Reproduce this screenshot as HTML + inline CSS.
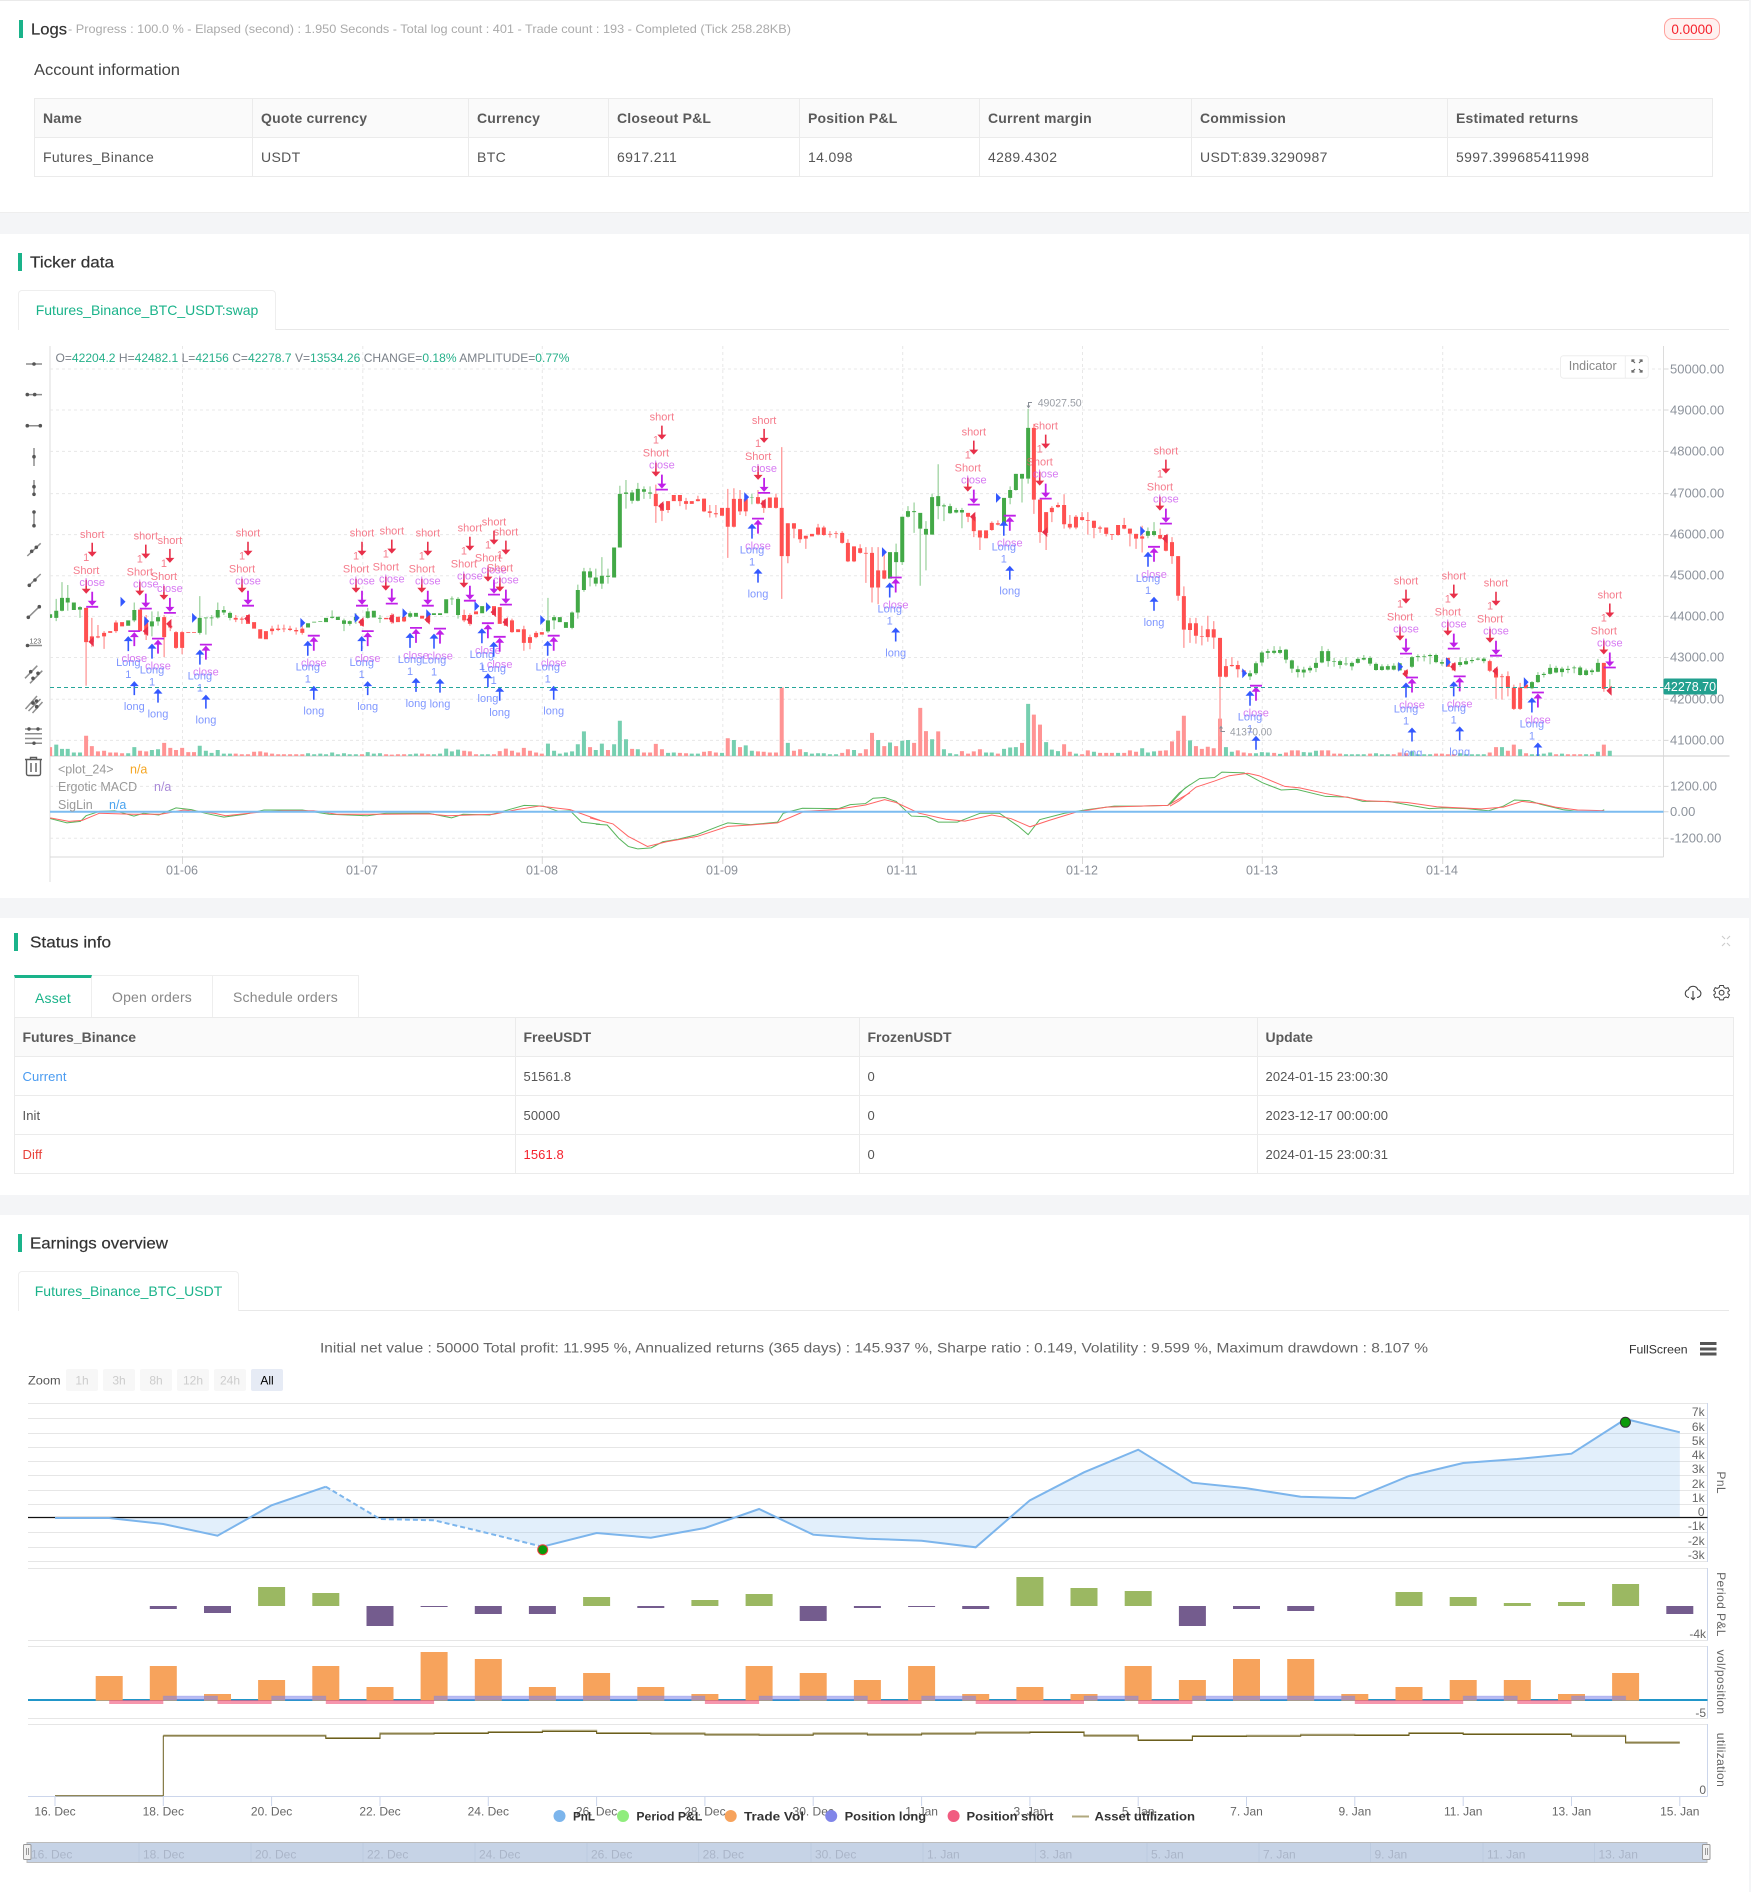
<!DOCTYPE html>
<html lang="en"><head><meta charset="utf-8"><title>Backtest</title>
<style>
html,body{margin:0;padding:0;background:#f4f5f7}
body{position:relative;width:1751px;height:1892px;overflow:hidden;font-family:"Liberation Sans",sans-serif;color:#555}
.sec{position:absolute;left:0;width:1749px;background:#fff}
table{position:absolute;border-collapse:collapse;table-layout:fixed;font-size:14px;color:#555}
th,td{border:1px solid #ebebeb;padding:0 0 0 8px;text-align:left;height:38px;white-space:nowrap;overflow:hidden}
th{background:#fafafa;font-weight:bold;letter-spacing:.2px;color:#5a5a5a}
#t1 td{letter-spacing:.35px}
#t2 th{letter-spacing:0;padding-left:7.5px}
#t2 td{font-size:13px;letter-spacing:.1px;padding-left:7.5px}
.tab{position:absolute;box-sizing:border-box;border:1px solid #eee;border-bottom:0;background:#fff;text-align:center;font-size:14px;color:#888;letter-spacing:.2px}
.ln{position:absolute;background:#e8e8e8;height:1px}
svg#o{position:absolute;left:0;top:0}
svg text{font-family:"Liberation Sans",sans-serif}
.w,.b,.v{vector-effect:non-scaling-stroke;fill:none}
.w{stroke-width:1.4}.b{stroke-width:4}.v{stroke-width:4}
.gw{stroke:#a6d7a8}.rw{stroke:#ff9f9f}.gb{stroke:#43a947}.rb{stroke:#ff5050}.gv{stroke:#76cfb0}.rv{stroke:#ff9494}
.cl text{font-size:11px;text-anchor:middle;fill-opacity:.78}
.r{fill:#f2566a}.p{fill:#cc55ee}.l{fill:#5a78ff}
.ax{font-size:13px;fill:#8d939c}
.xl{font-size:12.5px;fill:#8a8f98;text-anchor:middle}
.hy{font-size:12px;fill:#666;text-anchor:end}
.hx{font-size:12px;fill:#666;text-anchor:middle}
.nv{font-size:12px;fill:#aab5c8}
.lg{font-size:12px;font-weight:bold;fill:#333}
.at{font-size:12px;fill:#666;letter-spacing:.4px;text-anchor:middle}
.zb{font-size:12px;fill:#ccc;text-anchor:middle}
.ttl{font-size:16px;fill:#333;stroke:#333;stroke-width:.2}
.ic{fill:none;stroke:#8e8e8e;stroke-width:1.5}
.id{fill:#555}
.nz{vector-effect:non-scaling-stroke;fill:none}
</style></head><body>
<div class="sec" style="top:0;height:213px;border-top:1px solid #eaeaea;box-sizing:border-box;border-bottom:1px solid #eee"></div>
<div class="sec" style="top:234px;height:664px"></div>
<div class="sec" style="top:918px;height:277px"></div>
<div class="sec" style="top:1215px;height:677px"></div>

<table id="t1" style="left:34px;top:98px;width:1678px">
<colgroup><col style="width:218px"><col style="width:216px"><col style="width:140px"><col style="width:191px"><col style="width:180px"><col style="width:212px"><col style="width:256px"><col style="width:265px"></colgroup>
<tr><th>Name</th><th>Quote currency</th><th>Currency</th><th>Closeout P&amp;L</th><th>Position P&amp;L</th><th>Current margin</th><th>Commission</th><th>Estimated returns</th></tr>
<tr><td>Futures_Binance</td><td>USDT</td><td>BTC</td><td>6917.211</td><td>14.098</td><td>4289.4302</td><td>USDT:839.3290987</td><td>5997.399685411998</td></tr>
</table>

<div class="tab" style="left:18px;top:290px;width:258px;height:40px;line-height:39px;color:#1ab38a;border-radius:4px 4px 0 0;letter-spacing:0">Futures_Binance_BTC_USDT:swap</div>
<div class="ln" style="left:276px;top:329px;width:1453px"></div>

<div class="tab" style="left:14px;top:975px;width:78px;height:42px;line-height:41px;color:#1ab38a;border-top:3px solid #1ab38a;border-right:1px solid #eee">Asset</div>
<div class="tab" style="left:92px;top:975px;width:121px;height:42px;line-height:42px;border-left:0">Open orders</div>
<div class="tab" style="left:213px;top:975px;width:146px;height:42px;line-height:42px;border-left:0">Schedule orders</div>

<table id="t2" style="left:14px;top:1017px;width:1719px">
<colgroup><col style="width:501px"><col style="width:344px"><col style="width:398px"><col style="width:476px"></colgroup>
<tr><th>Futures_Binance</th><th>FreeUSDT</th><th>FrozenUSDT</th><th>Update</th></tr>
<tr><td style="color:#4a9bf0">Current</td><td>51561.8</td><td>0</td><td>2024-01-15 23:00:30</td></tr>
<tr><td>Init</td><td>50000</td><td>0</td><td>2023-12-17 00:00:00</td></tr>
<tr><td style="color:#e8413a">Diff</td><td style="color:#f5222d">1561.8</td><td>0</td><td>2024-01-15 23:00:31</td></tr>
</table>

<div class="tab" style="left:18px;top:1271px;width:221px;height:40px;line-height:39px;color:#1ab38a;border-radius:4px 4px 0 0;letter-spacing:0">Futures_Binance_BTC_USDT</div>
<div class="ln" style="left:239px;top:1310px;width:1490px"></div>

<svg id="o" width="1751" height="1892" viewBox="0 0 1751 1892" xmlns="http://www.w3.org/2000/svg">
<defs>
<clipPath id="pn"><rect x="50" y="346" width="1613.5" height="410"/></clipPath>
<g id="SA">
<path d="M0-64V-54M-6-27V-17" stroke="#e8304a" stroke-width="1.6"/><path d="M-4.5-55H4.5L0-50ZM-10.5-18H-1.5L-6-13Z" fill="#e8304a"/>
<path d="M0-15V-5M-6 0H6" stroke="#c020e8" stroke-width="1.8"/><path d="M-4.5-6H4.5L0-1Z" fill="#c020e8"/>
</g>
<g id="LA">
<path d="M-6 0H6M0 5V15" stroke="#c020e8" stroke-width="1.8"/><path d="M0 1L-4.5 6H4.5Z" fill="#c020e8"/>
<path d="M-6 9V20M0 54V64" stroke="#3358ff" stroke-width="1.6"/><path d="M-6 5L-10.5 10H-1.5ZM0 50L-4.5 55H4.5Z" fill="#3358ff"/>
</g>
</defs>

<!-- section headers -->
<rect x="19" y="20" width="4" height="18" fill="#1ab38a"/>
<text x="31" y="34.5" class="ttl" textLength="36" lengthAdjust="spacingAndGlyphs">Logs</text>
<text x="68" y="33" font-size="12" fill="#aaa" textLength="723" lengthAdjust="spacingAndGlyphs">- Progress : 100.0 % - Elapsed (second) : 1.950  Seconds - Total log count : 401 - Trade count : 193 - Completed (Tick 258.28KB)</text>
<text x="34" y="75" font-size="16" fill="#444" textLength="146" lengthAdjust="spacingAndGlyphs">Account information</text>
<rect x="1664.5" y="18.5" width="55" height="21" rx="8" fill="#fff1f0" stroke="#ffa39e"/>
<text x="1692" y="34" font-size="13.5" fill="#f5222d" text-anchor="middle">0.0000</text>

<rect x="18" y="253" width="4" height="18" fill="#1ab38a"/>
<text x="30" y="267.5" class="ttl" textLength="84" lengthAdjust="spacingAndGlyphs">Ticker data</text>
<rect x="14" y="933" width="4" height="18" fill="#1ab38a"/>
<text x="30" y="947.5" class="ttl" textLength="81" lengthAdjust="spacingAndGlyphs">Status info</text>
<rect x="18" y="1234" width="4" height="18" fill="#1ab38a"/>
<text x="30" y="1248.5" class="ttl" textLength="138" lengthAdjust="spacingAndGlyphs">Earnings overview</text>

<!-- status icons -->
<path d="M1722 936l3 3m5-3l-3 3m-5 7l3-3m5 3l-3-3" fill="none" stroke="#ccc" stroke-width="1.1"/>
<path d="M1689 997.5a4 4 0 0 1-.6-7.9a5 5 0 0 1 9.4 0a4 4 0 0 1-.8 7.9M1693 991V999.5m-2-2l2 2.2l2-2.2" fill="none" stroke="#444" stroke-width="1.1"/>
<circle cx="1721.6" cy="992.7" r="2.4" fill="none" stroke="#444" stroke-width="1.1"/>
<path d="M1719.8 985.5h3.6l.6 2l2 .9l2-.8l1.5 3l-1.6 1.2v1.8l1.6 1.2l-1.5 3l-2-.8l-2 .9l-.6 2h-3.6l-.6-2l-2-.9l-2 .8l-1.5-3l1.6-1.2v-1.8l-1.6-1.2l1.5-3l2 .8l2-.9z" fill="none" stroke="#444" stroke-width="1"/>

<!-- ticker chart -->
<path d="M50 346V882M1663.5 346V857" stroke="#dcdcdc" fill="none"/>
<path d="M50 369H1663M50 410H1663M50 451.4H1663M50 493.6H1663M50 534.6H1663M50 575.7H1663M50 616.4H1663M50 657.5H1663M50 699.3H1663M50 740.4H1663M50 786.4H1663M50 838.2H1663M182.5 346V857M362.8 346V857M542.3 346V857M722.8 346V857M902.7 346V857M1082.5 346V857M1262.3 346V857M1442.7 346V857" stroke="#e8e8e8" stroke-dasharray="3 3" fill="none"/>
<path d="M50 756H1729.5" stroke="#d6d6d6" stroke-width="1.2"/>
<path d="M50 857H1663.5" stroke="#d8d8d8"/>
<path d="M182.5 857v7M362.8 857v7M542.3 857v7M722.8 857v7M902.7 857v7M1082.5 857v7M1262.3 857v7M1442.7 857v7" stroke="#d8d8d8"/>
<path d="M1663.5 369h5M1663.5 410h5M1663.5 451.4h5M1663.5 493.6h5M1663.5 534.6h5M1663.5 575.7h5M1663.5 616.4h5M1663.5 657.5h5M1663.5 699.3h5M1663.5 740.4h5M1663.5 786.4h5M1663.5 811.8h5M1663.5 838.2h5" stroke="#d8d8d8"/>

<g clip-path="url(#pn)">
<!-- part 1 -->
<g transform="translate(0,340) scale(.38265,.35714)">
<path class="v gv" d="M147 1133V1166M162 1145V1166M177 1145V1166M193 1155V1166M209 1155V1166M335 1157V1166M351 1140V1166M397 1148V1166M413 1146V1166M522 1136V1166M538 1150V1166M553 1156V1166M569 1148V1166M585 1158V1166M601 1158V1166M805 1157V1166M821 1160V1166M837 1158V1166M852 1160V1166M868 1155V1166M883 1160V1166M899 1157V1166M914 1160V1166M930 1160V1166M961 1154V1166M977 1158V1166M993 1157V1166M1072 1160V1166M1087 1158V1166M1134 1160V1166M1150 1158V1166M1166 1144V1166M1181 1152V1166M1197 1147V1166M1260 1160V1166M1275 1160V1166M1432 1130V1166M1448 1150V1166M1463 1158V1166M1479 1155V1166M1495 1152V1166M1510 1132V1166M1526 1096V1166M1557 1148V1166"/>
<path class="v rv" d="M131 1140V1166M225 1108V1166M240 1137V1166M256 1152V1166M272 1150V1166M288 1155V1166M303 1155V1166M319 1157V1166M366 1150V1166M382 1152V1166M429 1128V1166M445 1142V1166M460 1148V1166M476 1142V1166M492 1154V1166M507 1154V1166M616 1158V1166M632 1160V1166M648 1160V1166M664 1153V1166M680 1152V1166M695 1155V1166M711 1158V1166M727 1160V1166M742 1160V1166M758 1160V1166M774 1160V1166M790 1160V1166M946 1160V1166M1009 1160V1166M1024 1161V1166M1040 1160V1166M1056 1160V1166M1103 1158V1166M1119 1160V1166M1213 1150V1166M1228 1152V1166M1244 1160V1166M1291 1160V1166M1306 1151V1166M1322 1144V1166M1338 1150V1166M1354 1155V1166M1369 1142V1166M1385 1150V1166M1401 1155V1166M1416 1158V1166M1542 1140V1166"/>
<path class="w gw" d="M147 725V787M162 678V760M177 686V758M209 745V778M351 735V790M397 760V830M413 760V800M522 717V825M538 777V825M553 770V800M569 735V780M585 745V770M601 760V785M868 757V780M899 780V815M914 785V800M930 765V795M961 750V780M993 770V792M1072 760V778M1181 718V742M1197 720V780M1432 722V820M1448 770V810M1495 760V810M1510 685V780M1526 638V705M1542 638V690M1557 640V690"/>
<path class="w rw" d="M225 750V968M240 778V860M256 798V835M272 815V865M303 785V820M382 770V840M429 770V888M445 790V815M460 815V865M476 815V880M616 770V790M632 775V795M711 800V825M727 797V815M742 797V818M758 800V815M774 805V825M790 800V825M1024 765V795M1056 770V790M1213 755V790M1228 765V800M1338 780V820M1369 800V870M1385 825V866M1401 815V835"/>
<path class="b gb" d="M131 768V778M147 758V778M162 722V758M177 722V735M193 735V756M209 748V755M335 785V800M351 756V785M397 788V802M413 776V788M522 778V820M538 777V779M553 777V779M569 756V777M585 756V763M601 764V778M805 793V805M821 789V791M837 787V789M852 778V790M868 775V778M883 775V784M899 785V795M914 787V795M930 775V785M961 760V778M977 758V777M993 778V780M1072 765V775M1087 764V775M1134 765V770M1150 765V770M1166 726V765M1181 724V726M1197 725V770M1260 745V765M1275 745V750M1432 785V816M1448 776V785M1463 776V790M1479 790V806M1495 763V806M1510 700V763M1526 648V700M1542 648V665M1557 665V682"/>
<path class="b rb" d="M225 750V846M240 830V846M256 830V833M272 820V830M288 815V820M303 791V815M319 790V802M366 755V815M382 785V825M429 776V832M445 800V805M460 818V862M476 818V862M492 818V820M507 818V820M616 778V783M632 780V783M648 770V795M664 790V808M680 810V836M695 815V838M711 808V815M727 808V812M742 808V810M758 808V812M774 812V816M790 808V820M946 783V800M1009 778V782M1024 770V790M1040 775V790M1056 775V788M1103 772V780M1119 765V790M1213 770V785M1228 770V795M1244 760V768M1291 745V770M1306 748V795M1322 780V800M1338 785V818M1354 810V818M1369 810V848M1385 832V848M1401 820V832M1416 818V825"/>
<path fill="#3358ff" d="M315 719l13 14-13 14zM377 773l13 14-13 14zM502 764l13 14-13 14zM785 778l13 14-13 14zM927 764l13 14-13 14zM1052 751l13 14-13 14zM1114 754l13 14-13 14zM1240 731l13 14-13 14zM1270 734l13 14-13 14zM1412 770l13 14-13 14z"/>
<path fill="#e8304a" d="M245 831l-14 14 14 14zM387 801l-14 14 14 14zM448 781l-14 14 14 14zM652 766l-14 14 14 14zM950 776l-14 14 14 14zM1029 766l-14 14 14 14zM1123 769l-14 14 14 14zM1233 769l-14 14 14 14zM1296 748l-14 14 14 14zM1327 776l-14 14 14 14z"/>
</g>
<!-- part 2 -->
<g transform="translate(590,340) scale(.38265,.35714)">
<path class="v gv" d="M31 1130V1166M63 1132V1166M78 1066V1166M94 1118V1166M125 1146V1166M204 1156V1166M219 1155V1166M266 1158V1166M282 1158V1166M345 1156V1166M376 1120V1166M407 1135V1166M423 1150V1166M517 1128V1166M564 1154V1166M580 1158V1166M596 1157V1166M611 1157V1166M627 1160V1166M643 1160V1166M690 1148V1166M753 1120V1166M784 1127V1166M816 1122V1166M831 1120V1166M894 1118V1166M925 1146V1166M941 1157V1166M957 1160V1166M1035 1155V1166M1050 1155V1166M1082 1145V1166M1098 1141V1166M1113 1140V1166M1145 1019V1166M1192 1126V1166M1207 1147V1166M1223 1151V1166M1270 1158V1166M1317 1153V1166M1380 1156V1166M1443 1143V1166M1458 1155V1166M1474 1152V1166"/>
<path class="v rv" d="M47 1148V1166M110 1145V1166M141 1155V1166M157 1155V1166M172 1131V1166M188 1146V1166M235 1156V1166M251 1157V1166M298 1153V1166M313 1151V1166M329 1155V1166M360 1115V1166M392 1140V1166M439 1152V1166M454 1153V1166M470 1155V1166M486 1155V1166M501 973V1166M533 1150V1166M549 1146V1166M659 1156V1166M674 1146V1166M706 1157V1166M721 1146V1166M737 1100V1166M769 1137V1166M800 1137V1166M847 1128V1166M863 1030V1166M878 1095V1166M910 1096V1166M972 1151V1166M988 1158V1166M1003 1152V1166M1019 1146V1166M1066 1158V1166M1129 1128V1166M1160 1049V1166M1176 1077V1166M1239 1132V1166M1254 1153V1166M1286 1160V1166M1301 1149V1166M1333 1156V1166M1349 1156V1166M1364 1156V1166M1396 1156V1166M1411 1149V1166M1427 1153V1166M1490 1150V1166M1505 1149V1166M1521 1124V1166M1537 1094V1166M1552 1052V1166"/>
<path class="w gw" d="M31 608V697M47 640V682M78 408V581M94 392V472M110 420V458M125 400V452M141 410V445M157 410V445M423 430V460M800 570V680M816 495V630M831 465V497M847 455V540M863 485V688M878 507V645M894 430V545M910 348V502M925 458V507M941 458V487M957 470V485M972 470V527M1098 410V460M1113 375V422M1129 375V455M1145 193V402M1458 525V555M1474 510V550"/>
<path class="w rw" d="M172 405V512M188 458V507M204 451V484M235 434V465M251 442V475M282 436V452M298 444V482M313 462V497M329 462V497M360 417V610M376 415V525M392 420V490M407 430V493M439 420V460M454 449V484M486 430V472M501 300V725M517 513V625M533 513V555M549 530V568M564 548V585M596 515V547M611 520V548M627 535V553M643 535V555M659 535V570M674 558V622M690 578V622M706 572V598M721 580V680M737 580V735M753 580V740M769 600V670M988 484V510M1003 485V552M1019 533V588M1035 533V555M1050 508V534M1066 505V519M1160 235V487M1176 447V568M1192 482V588M1207 465V510M1223 455V470M1239 432V528M1254 490V530M1270 490V530M1286 482V506M1301 482V545M1317 506V555M1333 520V540M1349 525V550M1364 544V560M1380 518V548M1396 498V530M1411 528V578M1427 543V585M1443 520V595M1490 528V558M1505 546V592M1521 552V627M1537 605V730M1552 690V862"/>
<path class="b gb" d="M31 660V682M47 660V663M63 581V665M78 431V581M94 427V431M110 427V450M125 417V450M141 418V425M157 427V430M423 440V441M784 594V668M800 594V622M816 495V622M831 479V495M847 479V482M863 484V528M878 529V545M894 440V545M910 437V465M925 463V466M941 465V485M957 476V483M972 476V483M1082 442V517M1098 420V442M1113 375V420M1129 375V388M1145 246V388M1458 535V548M1474 535V546"/>
<path class="b rb" d="M172 431V465M188 458V478M204 451V476M219 434V451M235 434V451M251 451V459M266 451V459M282 446V451M298 444V480M313 480V484M329 485V488M345 470V492M360 470V523M376 445V523M392 445V480M407 445V480M439 440V458M454 449V470M470 441V470M486 441V470M501 470V605M517 513V605M533 513V528M549 530V558M564 548V556M580 543V550M596 525V545M611 525V546M627 543V545M643 541V543M659 540V568M674 568V620M690 578V620M706 583V596M721 596V598M737 596V693M753 645V693M769 645V668M988 484V495M1003 495V535M1019 533V553M1035 533V555M1050 512V532M1066 513V517M1160 246V447M1176 447V538M1192 482V540M1207 470V482M1223 462V468M1239 462V516M1254 515V525M1270 495V525M1286 496V504M1301 504V506M1317 506V526M1333 525V528M1349 525V543M1364 544V546M1380 518V546M1396 518V528M1411 528V542M1427 543V556M1443 550V556M1490 546V556M1505 546V590M1521 566V605M1537 605V716M1552 717V811"/>
<path fill="#3358ff" d="M403 426l13 14-13 14zM763 580l13 14-13 14zM1061 428l13 14-13 14zM1438 521l13 14-13 14z"/>
<path fill="#e8304a" d="M192 451l-14 14 14 14zM459 444l-14 14 14 14zM1007 481l-14 14 14 14zM1195 524l-14 14 14 14zM1509 542l-14 14 14 14z"/>
</g>
<!-- part 3 -->
<g transform="translate(1170,340) scale(.3705,.35714)">
<path class="v gv" d="M151 1140V1166M167 1153V1166M232 1157V1166M248 1154V1166M264 1155V1166M297 1159V1166M361 1154V1166M378 1155V1166M394 1150V1166M475 1160V1166M491 1160V1166M507 1160V1166M523 1160V1166M556 1157V1166M572 1160V1166M588 1160V1166M653 1152V1166M669 1160V1166M686 1160V1166M702 1160V1166M783 1157V1166M799 1160V1166M815 1160V1166M831 1160V1166M847 1160V1166M896 1140V1166M945 1146V1166M977 1160V1166M993 1160V1166M1009 1158V1166M1026 1155V1166M1058 1158V1166M1123 1160V1166M1155 1153V1166M1187 1150V1166M54 1121V1166"/>
<path class="v rv" d="M70 1137V1166M86 1145V1166M102 1139V1166M118 1143V1166M135 1060V1166M183 1149V1166M199 1155V1166M216 1157V1166M281 1156V1166M313 1155V1166M329 1149V1166M345 1149V1166M410 1149V1166M427 1149V1166M443 1158V1166M459 1158V1166M540 1158V1166M604 1160V1166M620 1155V1166M637 1157V1166M718 1158V1166M734 1158V1166M750 1160V1166M766 1160V1166M863 1155V1166M880 1140V1166M912 1150V1166M928 1133V1166M961 1157V1166M1042 1160V1166M1074 1160V1166M1091 1160V1166M1107 1160V1166M1139 1160V1166M1171 1133V1166"/>
<path class="w gw" d="M216 925V952M232 900V938M248 870V912M264 865V893M281 857V880M297 858V880M313 865V905M329 895V932M345 912V945M361 915V945M378 912V932M394 890V930M410 857V905M427 865V915M443 890V915M459 895V920M475 888V912M491 900V925M507 888V906M523 882V897M540 885V912M556 903V926M572 908V926M588 908V925M604 905V925M653 885V918M669 880V900M686 880V900M702 878V908M718 878V905M734 895V912M783 888V915M799 890V910M815 888V905M831 888V897M847 888V905M977 955V978M993 930V960M1009 930V945M1026 908V937M1042 912V933M1058 915V943M1074 912V933M1091 912V933M1107 912V940M1123 920V940M1139 920V938M1155 893V930M1187 950V990"/>
<path class="w rw" d="M54 778V848M70 778V850M86 800V855M102 772V845M118 787V865M135 834V1110M151 893V945M167 888V915M183 898V945M863 895V930M880 925V1005M896 935V1007M912 928V998M928 965V1036M945 960V1036M1171 904V985"/>
<path class="b gb" d="M216 933V942M232 905V933M248 875V903M264 871V876M281 870V876M297 868V876M313 867V895M329 897V920M345 922V930M361 923V931M378 918V925M394 904V918M410 871V903M427 871V899M443 899V901M459 899V910M475 906V908M491 904V914M507 893V904M523 890V895M540 890V906M556 907V924M572 914V924M588 913V923M604 912V923M620 905V925M653 888V915M669 885V888M686 886V888M702 882V885M718 882V902M734 902V906M783 902V910M799 899V908M815 896V899M831 892V895M847 892V899M977 958V975M993 938V958M1009 935V938M1026 918V935M1042 918V931M1058 920V930M1074 921V924M1091 917V919M1107 917V938M1123 925V938M1139 925V930M1155 904V929"/>
<path class="b rb" d="M54 793V812M70 793V828M86 829V831M102 810V832M118 810V833M135 834V943M151 913V943M167 910V913M183 910V922M199 925V930M637 925V935M750 890V915M766 905V925M863 899V926M880 920V945M896 942V944M912 941V972M928 973V1033M945 973V1033M961 965V975M1171 904V977"/>
<path fill="#3358ff" d="M195 919l13 14-13 14zM616 901l13 14-13 14zM745 888l13 14-13 14zM955 944l13 14-13 14z"/>
<path fill="#e8304a" d="M641 921l-14 14 14 14zM770 901l-14 14 14 14zM884 913l-14 14 14 14zM1192 968l-14 14 14 14z"/>
</g>

<!-- short clusters -->
<g class="cl">
<g transform="translate(92.2,606.8)"><use href="#SA"/><text class="r" y="-69">short</text><text class="r" x="-6" y="-46">1</text><text class="r" x="-6" y="-33">Short</text><text class="p" y="-21">close</text></g>
<g transform="translate(145.8,608.6)"><use href="#SA"/><text class="r" y="-69">short</text><text class="r" x="-6" y="-46">1</text><text class="r" x="-6" y="-33">Short</text><text class="p" y="-21">close</text></g>
<g transform="translate(169.9,612.9)"><use href="#SA"/><text class="r" y="-69">short</text><text class="r" x="-6" y="-46">1</text><text class="r" x="-6" y="-33">Short</text><text class="p" y="-21">close</text></g>
<g transform="translate(248,605.7)"><use href="#SA"/><text class="r" y="-69">short</text><text class="r" x="-6" y="-46">1</text><text class="r" x="-6" y="-33">Short</text><text class="p" y="-21">close</text></g>
<g transform="translate(362,605.7)"><use href="#SA"/><text class="r" y="-69">short</text><text class="r" x="-6" y="-46">1</text><text class="r" x="-6" y="-33">Short</text><text class="p" y="-21">close</text></g>
<g transform="translate(391.8,603.6)"><use href="#SA"/><text class="r" y="-69">short</text><text class="r" x="-6" y="-46">1</text><text class="r" x="-6" y="-33">Short</text><text class="p" y="-21">close</text></g>
<g transform="translate(427.8,605.7)"><use href="#SA"/><text class="r" y="-69">short</text><text class="r" x="-6" y="-46">1</text><text class="r" x="-6" y="-33">Short</text><text class="p" y="-21">close</text></g>
<g transform="translate(469.9,600.7)"><use href="#SA"/><text class="r" y="-69">short</text><text class="r" x="-6" y="-46">1</text><text class="r" x="-6" y="-33">Short</text><text class="p" y="-21">close</text></g>
<g transform="translate(494,594.6)"><use href="#SA"/><text class="r" y="-69">short</text><text class="r" x="-6" y="-46">1</text><text class="r" x="-6" y="-33">Short</text><text class="p" y="-21">close</text></g>
<g transform="translate(505.9,604.6)"><use href="#SA"/><text class="r" y="-69">short</text><text class="r" x="-6" y="-46">1</text><text class="r" x="-6" y="-33">Short</text><text class="p" y="-21">close</text></g>
<g transform="translate(661.9,489.6)"><use href="#SA"/><text class="r" y="-69">short</text><text class="r" x="-6" y="-46">1</text><text class="r" x="-6" y="-33">Short</text><text class="p" y="-21">close</text></g>
<g transform="translate(764.1,492.9)"><use href="#SA"/><text class="r" y="-69">short</text><text class="r" x="-6" y="-46">1</text><text class="r" x="-6" y="-33">Short</text><text class="p" y="-21">close</text></g>
<g transform="translate(973.8,504.6)"><use href="#SA"/><text class="r" y="-69">short</text><text class="r" x="-6" y="-46">1</text><text class="r" x="-6" y="-33">Short</text><text class="p" y="-21">close</text></g>
<g transform="translate(1045.7,498.6)"><use href="#SA"/><text class="r" y="-69">short</text><text class="r" x="-6" y="-46">1</text><text class="r" x="-6" y="-33">Short</text><text class="p" y="-21">close</text></g>
<g transform="translate(1165.9,523.6)"><use href="#SA"/><text class="r" y="-69">short</text><text class="r" x="-6" y="-46">1</text><text class="r" x="-6" y="-33">Short</text><text class="p" y="-21">close</text></g>
<g transform="translate(1406,653.6)"><use href="#SA"/><text class="r" y="-69">short</text><text class="r" x="-6" y="-46">1</text><text class="r" x="-6" y="-33">Short</text><text class="p" y="-21">close</text></g>
<g transform="translate(1453.8,648.6)"><use href="#SA"/><text class="r" y="-69">short</text><text class="r" x="-6" y="-46">1</text><text class="r" x="-6" y="-33">Short</text><text class="p" y="-21">close</text></g>
<g transform="translate(1496,655.7)"><use href="#SA"/><text class="r" y="-69">short</text><text class="r" x="-6" y="-46">1</text><text class="r" x="-6" y="-33">Short</text><text class="p" y="-21">close</text></g>
<g transform="translate(1609.8,667.5)"><use href="#SA"/><text class="r" y="-69">short</text><text class="r" x="-6" y="-46">1</text><text class="r" x="-6" y="-33">Short</text><text class="p" y="-21">close</text></g>
<!-- long clusters -->
<g transform="translate(134.3,631.1)"><use href="#LA"/><text class="p" y="31">close</text><text class="l" x="-6" y="35">Long</text><text class="l" x="-6" y="47">1</text><text class="l" y="79">long</text></g>
<g transform="translate(158,638.6)"><use href="#LA"/><text class="p" y="31">close</text><text class="l" x="-6" y="35">Long</text><text class="l" x="-6" y="47">1</text><text class="l" y="79">long</text></g>
<g transform="translate(205.9,644.6)"><use href="#LA"/><text class="p" y="31">close</text><text class="l" x="-6" y="35">Long</text><text class="l" x="-6" y="47">1</text><text class="l" y="79">long</text></g>
<g transform="translate(313.8,635.7)"><use href="#LA"/><text class="p" y="31">close</text><text class="l" x="-6" y="35">Long</text><text class="l" x="-6" y="47">1</text><text class="l" y="79">long</text></g>
<g transform="translate(367.7,631.1)"><use href="#LA"/><text class="p" y="31">close</text><text class="l" x="-6" y="35">Long</text><text class="l" x="-6" y="47">1</text><text class="l" y="79">long</text></g>
<g transform="translate(416,627.9)"><use href="#LA"/><text class="p" y="31">close</text><text class="l" x="-6" y="35">Long</text><text class="l" x="-6" y="47">1</text><text class="l" y="79">long</text></g>
<g transform="translate(440,628.6)"><use href="#LA"/><text class="p" y="31">close</text><text class="l" x="-6" y="35">Long</text><text class="l" x="-6" y="47">1</text><text class="l" y="79">long</text></g>
<g transform="translate(487.9,623.2)"><use href="#LA"/><text class="p" y="31">close</text><text class="l" x="-6" y="35">Long</text><text class="l" x="-6" y="47">1</text><text class="l" y="79">long</text></g>
<g transform="translate(499.7,636.8)"><use href="#LA"/><text class="p" y="31">close</text><text class="l" x="-6" y="35">Long</text><text class="l" x="-6" y="47">1</text><text class="l" y="79">long</text></g>
<g transform="translate(553.7,635.7)"><use href="#LA"/><text class="p" y="31">close</text><text class="l" x="-6" y="35">Long</text><text class="l" x="-6" y="47">1</text><text class="l" y="79">long</text></g>
<g transform="translate(758,518.6)"><use href="#LA"/><text class="p" y="31">close</text><text class="l" x="-6" y="35">Long</text><text class="l" x="-6" y="47">1</text><text class="l" y="79">long</text></g>
<g transform="translate(895.7,577.5)"><use href="#LA"/><text class="p" y="31">close</text><text class="l" x="-6" y="35">Long</text><text class="l" x="-6" y="47">1</text><text class="l" y="79">long</text></g>
<g transform="translate(1009.8,515.7)"><use href="#LA"/><text class="p" y="31">close</text><text class="l" x="-6" y="35">Long</text><text class="l" x="-6" y="47">1</text><text class="l" y="79">long</text></g>
<g transform="translate(1154,546.8)"><use href="#LA"/><text class="p" y="31">close</text><text class="l" x="-6" y="35">Long</text><text class="l" x="-6" y="47">1</text><text class="l" y="79">long</text></g>
<g transform="translate(1256,685.7)"><use href="#LA"/><text class="p" y="31">close</text><text class="l" x="-6" y="35">Long</text><text class="l" x="-6" y="47">1</text><text class="l" y="79">long</text></g>
<g transform="translate(1412,677.5)"><use href="#LA"/><text class="p" y="31">close</text><text class="l" x="-6" y="35">Long</text><text class="l" x="-6" y="47">1</text><text class="l" y="79">long</text></g>
<g transform="translate(1459.7,676.4)"><use href="#LA"/><text class="p" y="31">close</text><text class="l" x="-6" y="35">Long</text><text class="l" x="-6" y="47">1</text><text class="l" y="79">long</text></g>
<g transform="translate(1537.9,692.5)"><use href="#LA"/><text class="p" y="31">close</text><text class="l" x="-6" y="35">Long</text><text class="l" x="-6" y="47">1</text><text class="l" y="79">long</text></g>
</g>
</g>

<!-- price line -->
<path d="M50 687.5H1663.5" stroke="#26a69a" stroke-dasharray="4 3"/>
<rect x="1663.5" y="678.5" width="53.5" height="16" rx="1.5" fill="#22a08f"/>
<text x="1690" y="691" font-size="12.5" fill="#fff" text-anchor="middle">42278.70</text>

<!-- high / low labels -->
<path d="M1032 402.5h-3.5v5m-1.5-2l1.5 2l1.5-2" fill="none" stroke="#8a8f98"/>
<text x="1037.7" y="406.5" font-size="11" fill="#9a9ea5" textLength="44" lengthAdjust="spacingAndGlyphs">49027.50</text>
<path d="M1225 731.5h-4v-5m-1.5 2l1.5-2l1.5 2" fill="none" stroke="#8a8f98"/>
<text x="1230" y="735.5" font-size="11" fill="#9a9ea5" textLength="42" lengthAdjust="spacingAndGlyphs">41370.00</text>

<!-- sub pane -->
<g transform="translate(0,340) scale(.38265,.35714)" fill="none" stroke-width="1">
<path class="nz" stroke="#58b55c" d="M131 1340L175 1352 210 1348 225 1332 260 1320 300 1318 350 1333 375 1325 415 1330 460 1310 500 1315 540 1326 585 1336 640 1328 690 1316 790 1316 860 1328 960 1332 1010 1325 1120 1325 1180 1338 1210 1328 1280 1330 1340 1312 1370 1303 1420 1305 1460 1320 1490 1318 1520 1350 1568 1356"/>
<path class="nz" stroke="#ff6464" d="M131 1338L180 1348 215 1345 260 1325 350 1328 420 1328 480 1316 560 1325 590 1332 680 1322 740 1318 820 1318 880 1328 1000 1328 1120 1327 1170 1332 1290 1328 1350 1315 1410 1305 1490 1315 1568 1345"/>
</g>
<g transform="translate(590,340) scale(.38265,.35714)" fill="none">
<path class="nz" stroke="#58b55c" d="M15 1356L45 1358 75 1395 100 1418 125 1425 160 1422 190 1405 230 1398 280 1385 340 1360 360 1352 420 1357 490 1350 505 1325 555 1311 650 1312 680 1301 720 1298 740 1283 770 1281 800 1292 840 1333 880 1335 910 1350 960 1350 1020 1325 1070 1325 1120 1362 1145 1385 1175 1343 1240 1325 1300 1315 1370 1305 1440 1305 1510 1303 1540 1268 1568 1245"/>
<path class="nz" stroke="#ff6464" d="M0 1338L60 1355 100 1390 150 1418 200 1405 280 1390 360 1362 420 1358 490 1352 560 1320 640 1315 720 1302 770 1287 800 1295 860 1325 930 1342 980 1347 1050 1330 1100 1340 1150 1363 1200 1345 1270 1322 1350 1308 1440 1305 1510 1303 1568 1268"/>
</g>
<g transform="translate(1170,340) scale(.3705,.35714)" fill="none">
<path class="nz" stroke="#58b55c" d="M0 1300L40 1255 80 1228 120 1225 140 1210 200 1212 250 1240 300 1260 340 1258 420 1278 480 1280 520 1292 590 1292 650 1303 700 1312 740 1310 800 1312 860 1318 900 1305 930 1288 970 1290 1000 1300 1060 1315 1100 1320 1160 1321 1172 1315"/>
<path class="nz" stroke="#ff6464" d="M0 1305L25 1290 70 1252 120 1235 160 1220 210 1213 240 1220 310 1250 350 1254 420 1270 530 1290 640 1295 720 1307 840 1313 900 1308 950 1292 1000 1298 1040 1308 1100 1316 1140 1317 1172 1318"/>
</g>
<path d="M50 811.8H1663.5" stroke="#7cbcf0" stroke-width="2"/>

<text x="55.5" y="362" font-size="12" fill="#7a8088" textLength="514" lengthAdjust="spacingAndGlyphs">O=<tspan fill="#26b08a">42204.2</tspan> H=<tspan fill="#26b08a">42482.1</tspan> L=<tspan fill="#26b08a">42156</tspan> C=<tspan fill="#26b08a">42278.7</tspan> V=<tspan fill="#26b08a">13534.26</tspan> CHANGE=<tspan fill="#26b08a">0.18%</tspan> AMPLITUDE=<tspan fill="#26b08a">0.77%</tspan></text>

<g font-size="12.5">
<text x="58" y="773.5" fill="#999">&lt;plot_24&gt;</text><text x="130" y="773.5" fill="#f5a623">n/a</text>
<text x="58" y="791" fill="#999">Ergotic MACD</text><text x="154" y="791" fill="#a98ad8">n/a</text>
<text x="58" y="809" fill="#999">SigLin</text><text x="109" y="809" fill="#4aa3ef">n/a</text>
</g>

<g class="ax">
<text x="1670" y="373.5">50000.00</text><text x="1670" y="414.5">49000.00</text><text x="1670" y="455.5">48000.00</text><text x="1670" y="497.5">47000.00</text><text x="1670" y="538.5">46000.00</text><text x="1670" y="579.5">45000.00</text><text x="1670" y="620.5">44000.00</text><text x="1670" y="661.5">43000.00</text><text x="1670" y="703.5">42000.00</text><text x="1670" y="744.5">41000.00</text><text x="1670" y="790.5">1200.00</text><text x="1670" y="816">0.00</text><text x="1670" y="842.5">-1200.00</text>
</g>
<g class="xl"><text x="182" y="874.5">01-06</text><text x="362" y="874.5">01-07</text><text x="542" y="874.5">01-08</text><text x="722" y="874.5">01-09</text><text x="902" y="874.5">01-11</text><text x="1082" y="874.5">01-12</text><text x="1262" y="874.5">01-13</text><text x="1442" y="874.5">01-14</text></g>

<rect x="1560.5" y="355.7" width="87.8" height="22.5" rx="3" fill="#fff" stroke="#eee"/>
<path d="M1625.3 356v22" stroke="#eee"/>
<text x="1592.7" y="370" font-size="12.5" fill="#888" text-anchor="middle">Indicator</text>
<path d="M1632 362v-2h2.5m-2.5 0l3 3M1642 362v-2h-2.5m2.5 0l-3 3M1632 370v2h2.5m-2.5 0l3-3M1642 370v2h-2.5m2.5 0l-3-3" fill="none" stroke="#666" stroke-width="1.2"/>

<!-- drawing toolbar -->
<g>
<path class="ic" d="M26 364H42M26 394.6H42M27 425.7H41M34 448V466M34 480V496M34 512V526M27.3 556L40.7 543.3M29 585.5L40.7 574M28.3 617.3L39.3 606.7M27 645.5H42M25 678.3L37.3 665.7M30 683.3L42.3 670.7M25.5 709L37 696M28.5 711L40.5 699M32.5 713L42.5 702M25 729H42M25 733.7H42M25 738.5H42M25 743.2H42"/>
<g class="id"><circle cx="34" cy="364" r="1.8"/><circle cx="27.3" cy="394.6" r="1.8"/><circle cx="34.7" cy="394.6" r="1.8"/><circle cx="27.3" cy="425.7" r="1.8"/><circle cx="40.3" cy="425.7" r="1.8"/><circle cx="34" cy="456.7" r="1.8"/><circle cx="34" cy="486.7" r="1.8"/><circle cx="34" cy="494.3" r="1.8"/><circle cx="34" cy="512" r="1.8"/><circle cx="34" cy="525.7" r="1.8"/><circle cx="31.7" cy="551.3" r="1.8"/><circle cx="36.3" cy="547.3" r="1.8"/><circle cx="29.3" cy="585.3" r="1.8"/><circle cx="35" cy="580" r="1.8"/><circle cx="28.3" cy="617.3" r="1.8"/><circle cx="39.3" cy="606.7" r="1.8"/><circle cx="27.5" cy="645.5" r="1.8"/><circle cx="30.7" cy="671.7" r="1.8"/><circle cx="33" cy="678.3" r="1.8"/><circle cx="38" cy="673.3" r="1.8"/><circle cx="33" cy="703" r="1.9"/><circle cx="36.7" cy="706.7" r="1.8"/><circle cx="36.5" cy="701" r="1.8"/><circle cx="29" cy="729" r="1.7"/><circle cx="38" cy="729" r="1.7"/><circle cx="34" cy="743.2" r="1.7"/></g>
<text x="35.3" y="643.5" font-size="7" fill="#5c5c5c" text-anchor="middle">123</text>
<path d="M25 759.5H42M30.5 759.5V757.5H36.5V759.5M26.5 760V773.5Q26.5 775.5 28.5 775.5H38.5Q40.5 775.5 40.5 773.5V760M31 763V772M36 763V772" fill="none" stroke="#5c5c5c" stroke-width="1.4"/>
</g>

<!-- earnings chart -->
<text x="320" y="1352.5" font-size="14" fill="#666" textLength="1108" lengthAdjust="spacingAndGlyphs">Initial net value : 50000 Total profit: 11.995 %, Annualized returns (365 days) : 145.937 %, Sharpe ratio : 0.149, Volatility : 9.599 %, Maximum drawdown : 8.107 %</text>
<text x="1629" y="1353.5" font-size="12" fill="#333" textLength="58.6" lengthAdjust="spacingAndGlyphs">FullScreen</text>
<path d="M1700 1343.5H1716.5M1700 1349H1716.5M1700 1354H1716.5" stroke="#555" stroke-width="3"/>
<text x="28" y="1384.5" font-size="12" fill="#555" textLength="32.6" lengthAdjust="spacingAndGlyphs">Zoom</text>
<g fill="#f7f7f7"><rect x="66" y="1369" width="32" height="22" rx="2"/><rect x="103" y="1369" width="32" height="22" rx="2"/><rect x="140" y="1369" width="32" height="22" rx="2"/><rect x="177" y="1369" width="32" height="22" rx="2"/><rect x="214" y="1369" width="32" height="22" rx="2"/></g>
<rect x="251" y="1369" width="32" height="22" rx="2" fill="#e6ebf5"/>
<g class="zb"><text x="82" y="1384.5">1h</text><text x="119" y="1384.5">3h</text><text x="156" y="1384.5">8h</text><text x="193" y="1384.5">12h</text><text x="230" y="1384.5">24h</text></g>
<text x="267" y="1384.5" font-size="12" fill="#000" text-anchor="middle">All</text>

<path d="M28 1403.5H1707.5M28 1418.5H1707.5M28 1433.5H1707.5M28 1447.5H1707.5M28 1461.5H1707.5M28 1475.5H1707.5M28 1490.5H1707.5M28 1504.5H1707.5M28 1532.5H1707.5M28 1547.5H1707.5M28 1561.5H1707.5M28 1568.5H1707.5M28 1640.5H1707.5M28 1646.5H1707.5M28 1718.5H1707.5M28 1724.5H1707.5" stroke="#e6e6e6" fill="none"/>
<path d="M1707.5 1403V1562M1707.5 1568V1640.5M1707.5 1646V1718.5M1707.5 1724V1796.5M28 1796.5H1707.5" stroke="#ccd6eb" fill="none"/>

<path d="M55 1518L109.2 1518 163.3 1524 217.5 1535.7 271.6 1505.3 325.8 1486.7 380 1519 434.1 1520.3 488.3 1533.3 542.4 1546.7 596.6 1533 650.8 1537.7 704.9 1528 759.1 1509 813.2 1534.7 867.4 1538.7 921.6 1540.7 975.7 1547.3 1029.9 1500.3 1084 1472.3 1138.2 1449.7 1192.4 1482.7 1246.5 1488.3 1300.7 1496.7 1354.8 1498.3 1409 1476 1463.2 1463 1517.3 1459 1571.5 1453.7 1625.6 1419 1679.8 1432.3V1517.5H55Z" fill="#7cb5ec" fill-opacity=".22"/>
<path d="M28 1517.5H1707.5" stroke="#111" stroke-width="1.2"/>
<path d="M55 1518L109.2 1518 163.3 1524 217.5 1535.7 271.6 1505.3 325.8 1486.7M542.4 1546.7L596.6 1533 650.8 1537.7 704.9 1528 759.1 1509 813.2 1534.7 867.4 1538.7 921.6 1540.7 975.7 1547.3 1029.9 1500.3 1084 1472.3 1138.2 1449.7 1192.4 1482.7 1246.5 1488.3 1300.7 1496.7 1354.8 1498.3 1409 1476 1463.2 1463 1517.3 1459 1571.5 1453.7 1625.6 1419 1679.8 1432.3" fill="none" stroke="#7cb5ec" stroke-width="2"/>
<path d="M325.8 1486.7L380 1519 434.1 1520.3 488.3 1533.3 542.4 1546.7" fill="none" stroke="#7cb5ec" stroke-width="2" stroke-dasharray="5 3"/>
<circle cx="542.7" cy="1549.7" r="5" fill="#0a9a0a" stroke="#f04040"/>
<circle cx="1625.4" cy="1422.3" r="5" fill="#0a9a0a" stroke="#333"/>

<g class="hy"><text x="1704.6" y="1416">7k</text><text x="1704.6" y="1431">6k</text><text x="1704.6" y="1445">5k</text><text x="1704.6" y="1459">4k</text><text x="1704.6" y="1473">3k</text><text x="1704.6" y="1488">2k</text><text x="1704.6" y="1502">1k</text><text x="1704.6" y="1516">0</text><text x="1704.6" y="1530">-1k</text><text x="1704.6" y="1545">-2k</text><text x="1704.6" y="1559">-3k</text><text x="1706" y="1638">-4k</text><text x="1706" y="1717">-5</text><text x="1706" y="1794">0</text></g>
<text class="at" transform="translate(1717,1482.7) rotate(90)">PnL</text>
<text class="at" transform="translate(1717,1604.5) rotate(90)">Period P&amp;L</text>
<text class="at" transform="translate(1717,1682) rotate(90)">vol/position</text>
<text class="at" transform="translate(1717,1760) rotate(90)">utilization</text>

<!-- period pnl bars -->
<g fill="#745c8e">
<rect x="149.8" y="1606" width="27" height="3"/><rect x="204" y="1606" width="27" height="7"/><rect x="366.5" y="1606" width="27" height="20"/><rect x="420.6" y="1606" width="27" height="1"/><rect x="474.8" y="1606" width="27" height="8"/><rect x="528.9" y="1606" width="27" height="8"/><rect x="637.3" y="1606" width="27" height="2"/><rect x="799.7" y="1606" width="27" height="15"/><rect x="853.9" y="1606" width="27" height="2"/><rect x="908.1" y="1606" width="27" height="1"/><rect x="962.2" y="1606" width="27" height="3"/><rect x="1178.9" y="1606" width="27" height="20"/><rect x="1233" y="1606" width="27" height="3"/><rect x="1287.2" y="1606" width="27" height="5"/><rect x="1666.3" y="1606" width="27" height="8"/>
</g>
<g fill="#9bb862">
<rect x="258.1" y="1587" width="27" height="19"/><rect x="312.3" y="1593" width="27" height="13"/><rect x="583.1" y="1597" width="27" height="9"/><rect x="691.4" y="1600" width="27" height="6"/><rect x="745.6" y="1594" width="27" height="12"/><rect x="1016.4" y="1577" width="27" height="29"/><rect x="1070.5" y="1588" width="27" height="18"/><rect x="1124.7" y="1591" width="27" height="15"/><rect x="1395.5" y="1592" width="27" height="14"/><rect x="1449.7" y="1597" width="27" height="9"/><rect x="1503.8" y="1603" width="27" height="3"/><rect x="1558" y="1602" width="27" height="4"/><rect x="1612.1" y="1584" width="27" height="22"/>
</g>

<!-- vol bars -->
<path d="M28 1700H1707.5" stroke="#2196c9" stroke-width="2"/>
<g fill="#f7a35c">
<rect x="95.7" y="1676" width="27" height="24.7"/><rect x="149.8" y="1666" width="27" height="34.7"/><rect x="204" y="1694" width="27" height="6.7"/><rect x="258.1" y="1680" width="27" height="20.7"/><rect x="312.3" y="1666" width="27" height="34.7"/><rect x="366.5" y="1687" width="27" height="13.7"/><rect x="420.6" y="1652" width="27" height="48.7"/><rect x="474.8" y="1659" width="27" height="41.7"/><rect x="528.9" y="1687" width="27" height="13.7"/><rect x="583.1" y="1673" width="27" height="27.7"/><rect x="637.3" y="1687" width="27" height="13.7"/><rect x="691.4" y="1694" width="27" height="6.7"/><rect x="745.6" y="1666" width="27" height="34.7"/><rect x="799.7" y="1673" width="27" height="27.7"/><rect x="853.9" y="1680" width="27" height="20.7"/><rect x="908.1" y="1666" width="27" height="34.7"/><rect x="962.2" y="1694" width="27" height="6.7"/><rect x="1016.4" y="1687" width="27" height="13.7"/><rect x="1070.5" y="1694" width="27" height="6.7"/><rect x="1124.7" y="1666" width="27" height="34.7"/><rect x="1178.9" y="1680" width="27" height="20.7"/><rect x="1233" y="1659" width="27" height="41.7"/><rect x="1287.2" y="1659" width="27" height="41.7"/><rect x="1341.3" y="1694" width="27" height="6.7"/><rect x="1395.5" y="1687" width="27" height="13.7"/><rect x="1449.7" y="1680" width="27" height="20.7"/><rect x="1503.8" y="1680" width="27" height="20.7"/><rect x="1558" y="1694" width="27" height="6.7"/><rect x="1612.1" y="1673" width="27" height="27.7"/>
</g>
<g fill="#8085e9" fill-opacity=".55" stroke="#8085e9" stroke-opacity=".25">
<rect x="163.3" y="1696" width="54.2" height="4"/><rect x="271.6" y="1696" width="54.2" height="4"/><rect x="434.1" y="1696" width="270.8" height="4"/><rect x="759.1" y="1696" width="108.3" height="4"/><rect x="921.6" y="1696" width="54.1" height="4"/><rect x="1084" y="1696" width="54.2" height="4"/><rect x="1192.4" y="1696" width="162.4" height="4"/><rect x="1463.2" y="1696" width="54.1" height="4"/><rect x="1571.5" y="1696" width="54.1" height="4"/>
</g>
<g fill="#f15c80" fill-opacity=".65">
<rect x="109.2" y="1700" width="54.1" height="4"/><rect x="217.5" y="1700" width="54.1" height="4"/><rect x="325.8" y="1700" width="108.3" height="4"/><rect x="704.9" y="1700" width="54.2" height="4"/><rect x="867.4" y="1700" width="54.2" height="4"/><rect x="975.7" y="1700" width="108.3" height="4"/><rect x="1138.2" y="1700" width="54.2" height="4"/><rect x="1354.8" y="1700" width="108.4" height="4"/><rect x="1517.3" y="1700" width="54.2" height="4"/>
</g>

<!-- utilization -->
<path d="M163.3 1735.2H325.8V1737.6H380V1733H434.1V1732.6H488.3V1731.6H542.4V1730.4H596.6V1732.6H650.8V1733H704.9V1734H759.1V1734.3H813.2V1733H867.4V1734H921.6V1733H975.7V1732H1029.9V1731.6H1084V1735H1138.2V1739.6H1192.4V1735.6H1246.5V1735.3H1300.7V1734.3H1354.8V1734.6H1409V1732.6H1463.2V1733.6H1571.5V1735.3H1625.6V1742H1679.8" fill="none" stroke="#b0a87e" stroke-width="1.2"/>
<path d="M55 1795.7H163.3V1736H325.8V1738.5H380V1734H434.1V1733.5H488.3V1732.5H542.4V1731.5H596.6V1733.5H650.8V1734H704.9V1735H759.1V1735.3H813.2V1734H867.4V1735H921.6V1734H975.7V1733H1029.9V1732.5H1084V1736H1138.2V1740.5H1192.4V1736.5H1246.5V1736.3H1300.7V1735.3H1354.8V1735.5H1409V1733.5H1463.2V1734.5H1571.5V1736.3H1625.6V1743H1679.8" fill="none" stroke="#6b5e1e" stroke-width="1"/>

<!-- x axis -->
<path d="M55 1796v10M163.3 1796v10M271.6 1796v10M380 1796v10M488.3 1796v10M596.6 1796v10M704.9 1796v10M813.2 1796v10M921.6 1796v10M1029.9 1796v10M1138.2 1796v10M1246.5 1796v10M1354.8 1796v10M1463.2 1796v10M1571.5 1796v10M1679.8 1796v10" stroke="#ccd6eb"/>
<g class="hx"><text x="55" y="1815.5">16. Dec</text><text x="163.3" y="1815.5">18. Dec</text><text x="271.6" y="1815.5">20. Dec</text><text x="380" y="1815.5">22. Dec</text><text x="488.3" y="1815.5">24. Dec</text><text x="596.6" y="1815.5">26. Dec</text><text x="704.9" y="1815.5">28. Dec</text><text x="813.2" y="1815.5">30. Dec</text><text x="921.6" y="1815.5">1. Jan</text><text x="1029.9" y="1815.5">3. Jan</text><text x="1138.2" y="1815.5">5. Jan</text><text x="1246.5" y="1815.5">7. Jan</text><text x="1354.8" y="1815.5">9. Jan</text><text x="1463.2" y="1815.5">11. Jan</text><text x="1571.5" y="1815.5">13. Jan</text><text x="1679.8" y="1815.5">15. Jan</text></g>

<!-- legend -->
<circle cx="559.5" cy="1816" r="6" fill="#7cb5ec"/><text class="lg" x="573" y="1820.5" textLength="22" lengthAdjust="spacingAndGlyphs">PnL</text>
<circle cx="623" cy="1816" r="6" fill="#90ed7d"/><text class="lg" x="636.4" y="1820.5" textLength="66" lengthAdjust="spacingAndGlyphs">Period P&amp;L</text>
<circle cx="730.7" cy="1816" r="6" fill="#f7a35c"/><text class="lg" x="744" y="1820.5" textLength="60" lengthAdjust="spacingAndGlyphs">Trade Vol</text>
<circle cx="831.2" cy="1816" r="6" fill="#8085e9"/><text class="lg" x="844.6" y="1820.5" textLength="81.5" lengthAdjust="spacingAndGlyphs">Position long</text>
<circle cx="953.6" cy="1816" r="6" fill="#f15c80"/><text class="lg" x="966.5" y="1820.5" textLength="87" lengthAdjust="spacingAndGlyphs">Position short</text>
<path d="M1072 1816.5H1089" stroke="#b0a87e" stroke-width="2"/><text class="lg" x="1094.5" y="1820.5" textLength="100.5" lengthAdjust="spacingAndGlyphs">Asset utilization</text>

<!-- navigator -->
<rect x="27" y="1842.5" width="1680" height="20" fill="#c6d3e6" stroke="#bcbcbc"/>
<path d="M139 1843v19M251 1843v19M363 1843v19M475 1843v19M587 1843v19M698.6 1843v19M811 1843v19M923 1843v19M1035.5 1843v19M1147 1843v19M1259 1843v19M1370.5 1843v19M1483 1843v19M1594.5 1843v19" stroke="#bccbe0"/>
<g class="nv"><text x="31" y="1858.5">16. Dec</text><text x="143" y="1858.5">18. Dec</text><text x="255" y="1858.5">20. Dec</text><text x="367" y="1858.5">22. Dec</text><text x="479" y="1858.5">24. Dec</text><text x="591" y="1858.5">26. Dec</text><text x="702.6" y="1858.5">28. Dec</text><text x="815" y="1858.5">30. Dec</text><text x="927" y="1858.5">1. Jan</text><text x="1039.5" y="1858.5">3. Jan</text><text x="1151" y="1858.5">5. Jan</text><text x="1263" y="1858.5">7. Jan</text><text x="1374.5" y="1858.5">9. Jan</text><text x="1487" y="1858.5">11. Jan</text><text x="1598.5" y="1858.5">13. Jan</text></g>
<rect x="23.5" y="1844.5" width="7.5" height="15" rx="1" fill="#f2f2f2" stroke="#999"/><path d="M26.5 1848v7M28.5 1848v7" stroke="#999"/>
<rect x="1702.5" y="1844.5" width="7.5" height="15" rx="1" fill="#f2f2f2" stroke="#999"/><path d="M1705.5 1848v7M1707.5 1848v7" stroke="#999"/>
</svg>
</body></html>
